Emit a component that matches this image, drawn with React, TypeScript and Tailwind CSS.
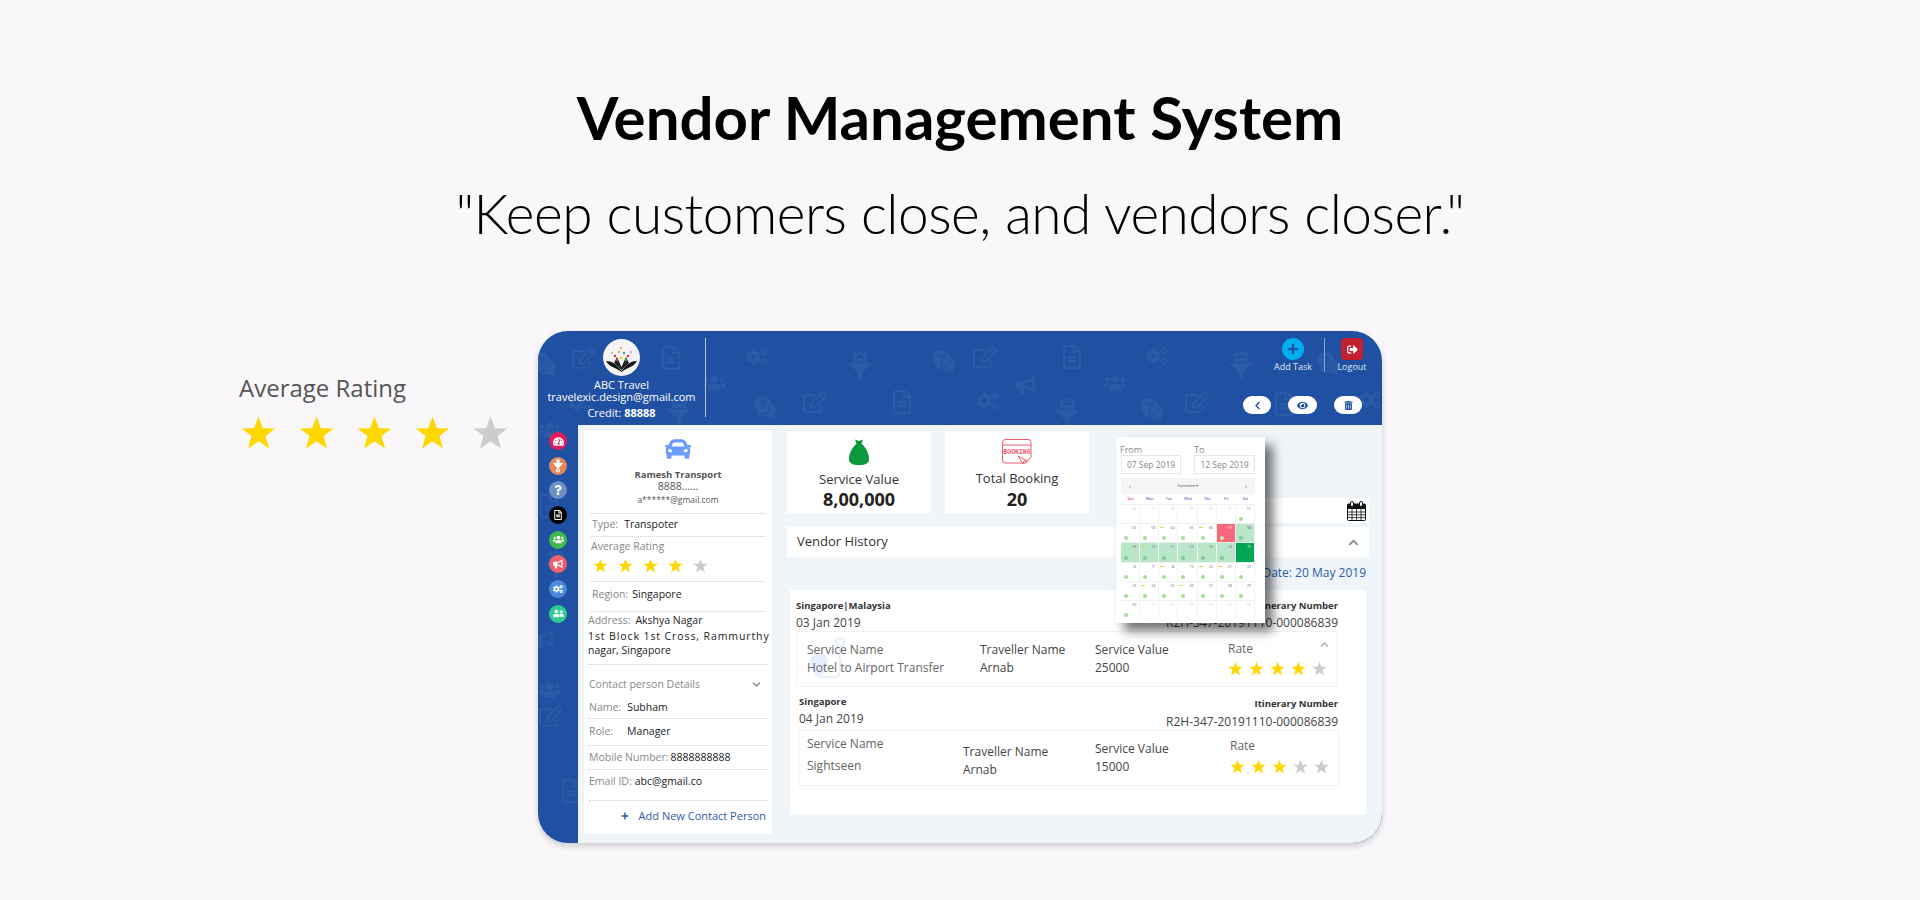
import { FaBullhorn, FaCar, FaChevronDown, FaChevronLeft, FaChevronUp, FaCogs, FaEye, FaPlus, FaRegEdit, FaRegFileAlt, FaTachometerAlt, FaTrashAlt, FaUserFriends, FaUsers, FaQuestion, FaSignOutAlt } from "react-icons/fa"

const pattern: [string, number, number][] = [
  ["q", 543, 363], ["e", 583, 357], ["d", 670, 357], ["c", 757, 357], ["f", 859, 361], ["q", 943, 360], ["e", 984, 356], ["d", 1071, 356], ["c", 1157, 356], ["f", 1240, 361], ["q", 1327, 362],
  ["c", 580, 403], ["f", 678, 407], ["u", 714, 383], ["q", 764, 406], ["e", 814, 401], ["d", 901, 401], ["c", 988, 401], ["m", 1027, 386], ["f", 1066, 408], ["u", 1115, 383], ["q", 1151, 408], ["e", 1196, 401], ["d", 1283, 403], ["c", 1370, 400],
  ["d", 548, 505], ["u", 550, 430], ["f", 555, 560], ["m", 545, 640], ["u", 550, 690], ["e", 550, 715], ["d", 570, 790],
]

// faint background drawings of the header and the sidebar
const PatternIcon = ({ kind }: { kind: string }) => {
  if (kind === "q") return (
    <svg width="24" height="26" viewBox="0 0 24 26" fill="currentColor">
      <path d="M18 8 C22 10 24 13 23 17 C22.500 19 22 20 21 21 L23 25 L16 22 C13 22.500 10 22 8 20 C14 20 19 15 18 8Z" />
      <path fillRule="evenodd" d="M9.500 1 C14.500 1 18 4.500 18 9.500 C18 14.500 14.500 18 9.500 18 L4 21 L5 16.500 C2.500 15 1 12.500 1 9.500 C1 4.500 4.500 1 9.500 1Z M6.500 7.500 L8.500 8 C8.800 6.500 11 6.500 11 8 C11 9.500 8.700 9.500 8.700 12 L10.500 12 C10.500 10.500 13 10 13 7.800 C13 4.500 7.200 4.300 6.500 7.500Z M8.700 13 H10.500 V15 H8.700Z" />
    </svg>
  )
  if (kind === "e") return <FaRegEdit size={24} />
  if (kind === "d") return <FaRegFileAlt size={24} />
  if (kind === "c") return <FaCogs size={22} />
  if (kind === "f") return (
    <svg width="24" height="30" viewBox="0 0 24 30" fill="currentColor">
      <circle cx="7" cy="5" r="2.500" /><circle cx="12" cy="3" r="2.500" /><circle cx="17" cy="5" r="2.500" />
      <path d="M5 8 H19 V12 H5Z" />
      <path d="M0 13 L24 13 L14 23 V29 L10 29 V23Z" />
    </svg>
  )
  if (kind === "u") return <FaUsers size={22} />
  return <FaBullhorn size={20} />
}

const Star = ({ on, size }: { on: boolean; size: number }) => (
  <svg width={size} height={size} viewBox="0 0 24 24" className="shrink-0">
    <polygon points="12,1 15,9 23.500,9.200 16.800,14.400 19.200,23 12,18 4.800,23 7.200,14.400 0.500,9.200 9,9" fill={on ? "#ffd700" : "#cccccc"} />
  </svg>
)

const Stars = ({ count, size, className }: { count: number; size: number; className: string }) => (
  <div className={`flex ${className}`}>
    {[1, 2, 3, 4, 5].map((n) => <Star key={n} on={n <= count} size={size} />)}
  </div>
)

const FunnelPin = () => (
  <svg width="10" height="14" viewBox="0 0 10 14" fill="none" stroke="#fff" strokeWidth="1.200">
    <circle cx="5" cy="2" r="1.400" fill="#fff" />
    <path d="M1 4.500 H9 L6 8 H4Z" fill="#fff" />
    <path d="M5 8 V10" />
    <circle cx="5" cy="11.500" r="1.500" />
  </svg>
)

const sideIcons = [
  { bg: "bg-[#e6195e]", icon: <FaTachometerAlt size={11} /> },
  { bg: "bg-[#e8885a]", icon: <FunnelPin /> },
  { bg: "bg-[#6c8fc5]", icon: <FaQuestion size={10} /> },
  { bg: "bg-black", icon: <FaRegFileAlt size={10} /> },
  { bg: "bg-[#3fb84f]", icon: <FaUsers size={11} /> },
  { bg: "bg-[#ef5f6e]", icon: <FaBullhorn size={10} /> },
  { bg: "bg-[#4a89dc]", icon: <FaCogs size={10} /> },
  { bg: "bg-[#2ecc8f]", icon: <FaUserFriends size={11} /> },
]

const calRows = [
  ["26", "27", "28", "29", "30", "31", "01"],
  ["02", "03", "04", "05", "06", "07", "08"],
  ["09", "10", "11", "12", "13", "14", "15"],
  ["16", "17", "18", "19", "20", "21", "22"],
  ["23", "24", "25", "26", "27", "28", "29"],
  ["30", "01", "02", "03", "04", "05", "06"],
]
const barDays = ["r1c2", "r1c4", "r2c1", "r3c2", "r3c4", "r3c5", "r4c1", "r4c3"]

const Calendar = () => (
  <div className="absolute left-[578px] top-[106px] z-20 h-[186px] w-[149px] bg-white px-[5px] pt-[8px] shadow-[8px_8px_10px_rgba(0,0,0,0.55)]">
    <div className="flex justify-between pr-[5px] text-[9px] leading-[10px] text-[#888]">
      <div className="w-[60px]">
        <p className="-ml-[1px]">From</p>
        <p className="h-[19px] border border-[#e8e8e8] text-center text-[8.5px] leading-[18px]">07 Sep 2019</p>
      </div>
      <div className="w-[61px]">
        <p>To</p>
        <p className="h-[19px] border border-[#e8e8e8] text-center text-[8.5px] leading-[18px]">12 Sep 2019</p>
      </div>
    </div>
    <div className="mt-[4px] flex h-[16px] w-[134px] items-center justify-between bg-[#f5f5f5] px-[8px] text-[6px] text-[#555]">
      <span>‹</span>
      <span className="text-[3.500px]">September ▾</span>
      <span>›</span>
    </div>
    <div className="grid h-[10px] w-[134px] grid-cols-7 text-center text-[3.500px] font-semibold leading-[10px] text-[#6a5acd]">
      {["Sun", "Mon", "Tue", "Wed", "Thu", "Fri", "Sat"].map((d, i) => (
        <span key={d} className={i === 0 ? "text-[#e5455a]" : ""}>{d}</span>
      ))}
    </div>
    <div className="w-[134px]">
      {calRows.map((row, r) => (
        <div key={r} className="grid h-[19.200px] grid-cols-7 border-t border-[#f0f0f0]">
          {row.map((day, c) => {
            const muted = (r === 0 && c < 6) || (r === 5 && c > 0)
            const start = r === 1 && c === 5
            const end = r === 2 && c === 6
            const range = (r === 1 && c === 6) || (r === 2 && c < 6)
            const dot = !muted && !end
            return (
              <div key={c} className={`relative border-r border-[#f3f3f3] text-right text-[3.500px] leading-[7px] ${start ? "bg-[#f7687b] text-white" : end ? "bg-[#00a651] text-white" : range ? "bg-[#b9e5c9] text-[#666]" : muted ? "text-[#ccc]" : "text-[#666]"}`}>
                <span className="pr-[3px]">{day}</span>
                {barDays.includes(`r${r}c${c}`) && <span className="absolute left-[1px] top-[3px] h-[1px] w-[4px] bg-[#f6c945]" />}
                {dot && <span className={`absolute bottom-[2px] left-[3px] h-[4px] w-[4px] rounded-full ${start ? "bg-[#c8e6b0]" : range ? "bg-[#7fcb8e]" : "bg-[#a8dc98]"}`} />}
              </div>
            )
          })}
        </div>
      ))}
    </div>
  </div>
)

const InfoRow = ({ label, value, className, valueClass }: { label: string; value: string; className: string; valueClass?: string }) => (
  <div className={`flex items-center border-b border-dotted border-[#ccc] ${className}`}>
    <span className="text-[#888]">{label}</span>
    <span className={`text-[#222] ${valueClass}`}>{value}</span>
  </div>
)

const App = () => {
  return (
    <div className="h-[900px] overflow-hidden bg-[#f9f7f9] font-['Open_Sans',sans-serif]">
      <div className="pt-[82px] text-center font-['Lato',sans-serif] text-black">
        <h1 className="text-[60px] font-bold leading-[70px]">Vendor Management System</h1>
        <p className="mt-[26px] text-[55px] font-light leading-[70px] tracking-[-0.5px]">"Keep customers close, and vendors closer."</p>
      </div>

      <div className="mt-[83px] flex pl-[239px]">
        <div className="w-[299px] pt-[41px]">
          <p className="text-[24px] leading-[32px] text-[#555]">Average Rating</p>
          <div className="ml-[2px] mt-[11px] flex gap-[23px]">
            {[1, 2, 3, 4, 5].map((n) => <Star key={n} on={n <= 4} size={35} />)}
          </div>
        </div>

        <div className="relative h-[512px] w-[844px] overflow-hidden rounded-[30px] bg-[#1f50a2] shadow-[0_3px_6px_rgba(0,0,0,0.18)]">
          {pattern.map(([kind, x, y], i) => (
            <span key={i} className="pointer-events-none absolute text-[#2a5aa8]" style={{ left: x - 538 - 11, top: y - 331 - 11 }}>
              <PatternIcon kind={kind} />
            </span>
          ))}

          <div className="relative flex h-[94px]">
            <div className="flex w-[167px] flex-col items-center pt-[8px] text-center text-white">
              <svg width="37" height="37" viewBox="0 0 37 37">
                <circle cx="18.500" cy="18.500" r="18.500" fill="#f4f4f4" />
                <path d="M3 22 C9 22 13 25 18.500 32 C24 25 28 22 34 22 C30 29 24 28 18.500 33 C13 28 7 29 3 22Z" fill="#111" />
                <path d="M11 24 L14 18 L18.500 28 L23 18 L26 24 L18.500 31Z" fill="#222" />
                <circle cx="12" cy="17" r="1.200" fill="#e8262c" /><circle cx="16" cy="13" r="1.200" fill="#f7a81b" /><circle cx="21" cy="14" r="1.200" fill="#2a9fd8" /><circle cx="25" cy="17" r="1.200" fill="#e8262c" /><circle cx="18" cy="19" r="1.400" fill="#f4d21f" /><circle cx="9" cy="14" r="0.800" fill="#37a84a" /><circle cx="28" cy="13" r="0.800" fill="#c2278f" /><circle cx="14" cy="21" r="1.200" fill="#c2278f" /><circle cx="23" cy="21" r="1.200" fill="#37a84a" /><circle cx="18" cy="9" r="0.800" fill="#e8262c" />
              </svg>
              <p className="mt-[2px] text-[11px] leading-[13px]">ABC Travel</p>
              <p className="text-[11px] leading-[12px]">travelexic.design@gmail.com</p>
              <p className="mt-[3px] text-[11px] leading-[13px]">Credit: <b>88888</b></p>
            </div>
            <div className="mt-[7px] h-[79px] w-px bg-[#b8c9e2]" />
            <div className="ml-auto flex h-full flex-col items-end pr-[14px]">
              <div className="flex pt-[7px]">
                <div className="flex w-[60px] flex-col items-center text-[9px] leading-[11px] text-[#dfe7f3]">
                  <span className="flex h-[22px] w-[22px] items-center justify-center rounded-full bg-[#00aeef] text-[#1f50a2]"><FaPlus size={12} /></span>
                  <span className="mt-[1px]">Add Task</span>
                </div>
                <div className="ml-[1px] h-[34px] w-px bg-[#8aa4cf]" />
                <div className="ml-[11px] flex w-[32px] flex-col items-center text-[9px] leading-[11px] text-[#dfe7f3]">
                  <span className="flex h-[22px] w-[22px] items-center justify-center rounded-[4px] bg-[#c3202f] text-white"><FaSignOutAlt size={11} /></span>
                  <span className="mt-[1px]">Logout</span>
                </div>
              </div>
              <div className="mr-[6px] mt-[24px] flex text-[#1f50a2]">
                <span className="flex h-[18px] w-[28px] items-center justify-center rounded-full bg-white"><FaChevronLeft size={9} /></span>
                <span className="ml-[17px] flex h-[18px] w-[29px] items-center justify-center rounded-full bg-white"><FaEye size={11} /></span>
                <span className="ml-[17px] flex h-[18px] w-[28px] items-center justify-center rounded-full bg-white"><FaTrashAlt size={9} /></span>
              </div>
            </div>
          </div>

          <div className="relative flex h-[418px]">
            <div className="flex w-[40px] flex-col items-center gap-[6.700px] pt-[7px]">
              {sideIcons.map((s, i) => (
                <span key={i} className={`flex h-[18px] w-[18px] items-center justify-center rounded-full text-white ${s.bg}`}>{s.icon}</span>
              ))}
            </div>

            <div className="flex flex-1 bg-[#f0f5fa] pl-[5px]">
              <div className="mt-[4px] h-[406px] w-[190px] border border-[#eef0f3] bg-white px-[7px] text-[10.500px]">
                <div className="flex h-[84px] flex-col items-center border-b border-dotted border-[#ccc] pt-[6px] text-[#555]">
                  <FaCar size={26} color="#6b9bff" />
                  <p className="mt-[7px] text-[9.500px] font-bold leading-[12px] text-[#555]">Ramesh Transport</p>
                  <p className="text-[10.500px] leading-[11px]">8888......</p>
                  <p className="mt-[2px] text-[8.500px] leading-[11px]">a******@gmail.com</p>
                </div>
                <InfoRow label="Type:" value="Transpoter" className="h-[23px] pl-[1px]" valueClass="ml-[6px]" />
                <div className="h-[45px] border-b border-dotted border-[#ccc]">
                  <p className="pt-[2px] text-[#888]">Average Rating</p>
                  <Stars count={4} size={15} className="mt-[3px] gap-[10px] pl-[2px]" />
                </div>
                <InfoRow label="Region:" value="Singapore" className="h-[30px] pb-[4px] pl-[1px]" valueClass="ml-[4px]" />
                <div className="-mx-[3px] h-[53px] border-b border-dotted border-[#ccc] pt-[1px] leading-[14px] text-[#222]">
                  <p><span className="text-[#888]">Address:</span><span className="ml-[5px]">Akshya Nagar</span></p>
                  <p className="mt-[2px] whitespace-nowrap tracking-[0.900px]">1st Block 1st Cross, Rammurthy</p>
                  <p>nagar, Singapore</p>
                </div>
                <div className="-mx-[2px] flex h-[32px] items-center justify-between pr-[6px] pt-[7px] text-[#888]">
                  <span>Contact person Details</span>
                  <FaChevronDown size={9} />
                </div>
                <InfoRow label="Name:" value="Subham" className="-mx-[2px] h-[22px]" valueClass="ml-[6px]" />
                <InfoRow label="Role:" value="Manager" className="-mx-[2px] h-[27px]" valueClass="ml-[14px]" />
                <InfoRow label="Mobile Number:" value="8888888888" className="-mx-[2px] h-[24px]" valueClass="ml-[2px]" />
                <InfoRow label="Email ID:" value="abc@gmail.co" className="-mx-[2px] h-[31px] pb-[7px]" valueClass="ml-[3px]" />
                <div className="-mr-[1px] flex h-[30px] items-center justify-end text-[11px] text-[#2a5caa]">
                  <FaPlus size={8} className="mr-[10px]" />
                  <span className="whitespace-nowrap">Add New Contact Person</span>
                </div>
              </div>

              <div className="ml-[14px] w-[582px]">
                <div className="flex h-[82px] gap-[14px] pt-[6px]">
                  <div className="flex h-[82px] w-[144px] flex-col items-center bg-white pt-[8px]">
                    <svg width="20" height="26" viewBox="0 0 20 26">
                      <path d="M6 0.500 L10 2 L14 0.500 L12.500 5 C17 8 20 15 20 20 C20 24 17 26 10 26 C3 26 0 24 0 20 C0 15 3 8 7.500 5Z" fill="#0a9a3c" />
                    </svg>
                    <p className="mt-[5px] text-[13px] leading-[18px] text-[#333]">Service Value</p>
                    <p className="text-[18px] font-bold leading-[22px] text-[#222]">8,00,000</p>
                  </div>
                  <div className="flex h-[82px] w-[144px] flex-col items-center bg-white pt-[8px]">
                    <svg width="30" height="26" viewBox="0 0 30 26">
                      <path d="M4 0.500 H26 Q29 0.500 29 3 V18 L24 24 H3 Q0.500 24 0.500 21 V3 Q0.500 0.500 4 0.500Z" fill="none" stroke="#ee5a6a" />
                      <path d="M0.500 6 H29" stroke="#ee5a6a" />
                      <text x="15" y="15" fontSize="6.500" fontWeight="700" fill="#ee5a6a" textAnchor="middle" fontFamily="'Liberation Mono',monospace">BOOKING</text>
                      <path d="M16 17 L21 25 L22 22 L25 22Z" fill="#fff" stroke="#ee5a6a" />
                    </svg>
                    <p className="mt-[4px] text-[13px] leading-[18px] text-[#333]">Total Booking</p>
                    <p className="text-[18px] font-bold leading-[24px] text-[#222]">20</p>
                  </div>
                  <div className="ml-auto mt-[67px] flex h-[25px] w-[168px] shrink-0 items-center justify-end bg-white pr-[3px]">
                    <svg width="19" height="20" viewBox="0 0 19 20">
                      <rect x="0.500" y="3" width="18" height="16.500" rx="1" fill="#fff" stroke="#111" />
                      <rect x="0.500" y="3" width="18" height="5" rx="1" fill="#111" />
                      <path d="M0.500 11 H18.500 M0.500 13.800 H18.500 M0.500 16.600 H18.500 M5 8 V19 M9.500 8 V19 M14 8 V19" stroke="#111" strokeWidth="0.800" />
                      <rect x="3.500" y="0.500" width="3" height="5" rx="1.500" fill="#fff" stroke="#111" />
                      <rect x="12.500" y="0.500" width="3" height="5" rx="1.500" fill="#fff" stroke="#111" />
                    </svg>
                  </div>
                </div>
                <div className="mt-[20px] flex h-[30px] items-center justify-between bg-white pl-[10px] pr-[10px] text-[13px] text-[#333]">
                  <span>Vendor History</span>
                  <FaChevronUp size={11} color="#888" />
                </div>
                <p className="mt-[8px] pr-[3px] text-right text-[12px] leading-[16px] text-[#2a5caa]">Date: 20 May 2019</p>
                <div className="ml-[3px] mt-[9px] h-[225px] w-[576px] bg-white pl-[6px] pr-[28px] pt-[9px] text-[12px] text-[#444]">
                  <div className="flex items-start justify-between">
                    <div>
                      <p className="text-[9.500px] font-bold leading-[14px] text-[#333]">Singapore|Malaysia</p>
                      <p className="mt-[1px] leading-[17px]">03 Jan 2019</p>
                    </div>
                    <div className="text-right">
                      <p className="text-[9.500px] font-bold leading-[14px] text-[#333]">Itinerary Number</p>
                      <p className="mt-[1px] leading-[17px]">R2H-347-20191110-000086839</p>
                    </div>
                  </div>
                  <div className="relative h-[56px] border border-[#f0f2f5]">
                    <svg width="36" height="48" viewBox="0 0 36 48" className="absolute left-[12px] top-[5px]">
                      <path d="M10 16 C4 16 1 21 1 25 C1 32 10 42 10 42 C10 42 19 32 19 25 C19 21 16 16 10 16Z" fill="#e6effb" />
                      <circle cx="31" cy="5" r="4" fill="none" stroke="#e6effb" strokeWidth="2.500" />
                      <path d="M31 9 V34 Q31 40 25 40 H12" fill="none" stroke="#e6effb" strokeWidth="2" />
                    </svg>
                    <div className="relative flex pl-[10px] pt-[9px]">
                      <div className="w-[173px] leading-[18px] text-[#666]">
                        <p>Service Name</p>
                        <p>Hotel to Airport Transfer</p>
                      </div>
                      <div className="w-[115px] leading-[18px]">
                        <p>Traveller Name</p>
                        <p>Arnab</p>
                      </div>
                      <div className="w-[133px] leading-[18px]">
                        <p>Service Value</p>
                        <p>25000</p>
                      </div>
                      <div className="-mt-[1px] leading-[18px] text-[#666]">
                        <p>Rate</p>
                        <Stars count={4} size={15} className="mt-[3px] gap-[6px]" />
                      </div>
                    </div>
                    <FaChevronUp size={9} color="#aaa" className="absolute right-[8px] top-[8px]" />
                  </div>
                  <div className="mt-[8px] flex items-start justify-between pl-[3px]">
                    <div>
                      <p className="text-[9.500px] font-bold leading-[14px] text-[#333]">Singapore</p>
                      <p className="mt-[1px] leading-[17px]">04 Jan 2019</p>
                    </div>
                    <div className="pt-[2px] text-right">
                      <p className="text-[9.500px] font-bold leading-[14px] text-[#333]">Itinerary Number</p>
                      <p className="mt-[2px] leading-[17px]">R2H-347-20191110-000086839</p>
                    </div>
                  </div>
                  <div className="-mr-[1px] ml-[2px] flex h-[56px] border border-[#f0f2f5] pl-[8px]">
                    <div className="w-[156px] pt-[4px] leading-[18px] text-[#666]">
                      <p>Service Name</p>
                      <p className="mt-[4px]">Sightseen</p>
                    </div>
                    <div className="w-[132px] pt-[12px] leading-[18px]">
                      <p>Traveller Name</p>
                      <p>Arnab</p>
                    </div>
                    <div className="w-[135px] pt-[9px] leading-[18px]">
                      <p>Service Value</p>
                      <p>15000</p>
                    </div>
                    <div className="pt-[6px] leading-[18px] text-[#666]">
                      <p>Rate</p>
                      <Stars count={3} size={15} className="mt-[4px] gap-[6px]" />
                    </div>
                  </div>
                </div>
              </div>
            </div>
          </div>

          <Calendar />
        </div>
      </div>
    </div>
  )
}

export default App
